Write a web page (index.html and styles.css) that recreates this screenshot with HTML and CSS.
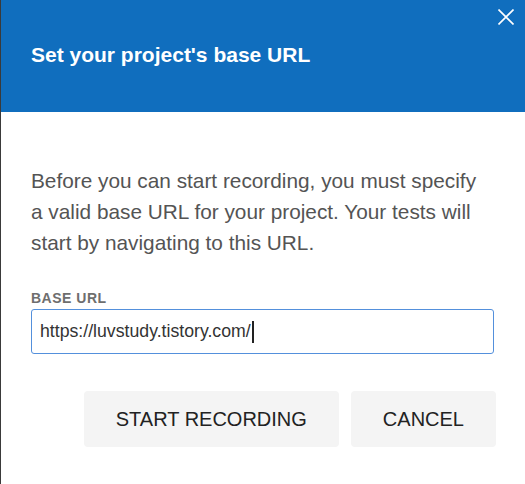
FILE: index.html
```html
<!DOCTYPE html>
<html lang="en">
<head>
<meta charset="utf-8">
<title>Set your project's base URL</title>
<link rel="stylesheet" href="styles.css">
</head>
<body>
<div class="dialog">
  <header class="dialog-header">
    <h1 class="dialog-title">Set your project's base URL</h1>
    <button class="close-btn" aria-label="Close">
      <svg width="16" height="16" viewBox="0 0 16 16"><path d="M0.5 0.5 L15.5 15.5 M15.5 0.5 L0.5 15.5" stroke="#fff" stroke-width="1.6" fill="none"/></svg>
    </button>
  </header>
  <main class="dialog-body">
    <p class="intro">Before you can start recording, you must specify a valid base URL for your project. Your tests will start by navigating to this URL.</p>
    <label class="field-label">BASE URL</label>
    <div class="url-input"><span class="url-text">https://luvstudy.tistory.com/</span><span class="caret"></span></div>
    <div class="actions">
      <button class="btn">START RECORDING</button>
      <button class="btn">CANCEL</button>
    </div>
  </main>
</div>
</body>
</html>
```

FILE: styles.css
```css
html, body {
  margin: 0;
  padding: 0;
  background: #ffffff;
}
body {
  font-family: "Liberation Sans", Arial, sans-serif;
}
.dialog {
  width: 524px;
  height: 484px;
  border-left: 1px solid #3a3a3a;
  background: #ffffff;
  display: flex;
  flex-direction: column;
}
.dialog-header {
  position: relative;
  height: 112px;
  background: #106ebe;
  padding: 0 30px;
  display: flex;
  align-items: flex-start;
}
.dialog-title {
  margin: 41px 0 0 0;
  font-size: 21px;
  line-height: 28px;
  font-weight: bold;
  color: #ffffff;
}
.close-btn {
  position: absolute;
  top: 8px;
  right: 10px;
  width: 18px;
  height: 18px;
  padding: 1px;
  border: 0;
  background: transparent;
  display: flex;
  align-items: center;
  justify-content: center;
}
.dialog-body {
  padding: 53px 31px 0 30px;
  display: flex;
  flex-direction: column;
}
.intro {
  margin: 0;
  max-width: 452px;
  font-size: 20.8px;
  line-height: 31px;
  color: #545454;
}
.field-label {
  margin-top: 32px;
  font-size: 14px;
  line-height: 17px;
  font-weight: bold;
  letter-spacing: 0.5px;
  color: #6e6e6e;
}
.url-input {
  margin-top: 2px;
  height: 43px;
  border: 1px solid #5490dc;
  border-radius: 3px;
  padding: 0 8px;
  display: flex;
  align-items: center;
  font-size: 17.7px;
  color: #333333;
}
.caret {
  display: inline-block;
  width: 2px;
  height: 22px;
  background: #222222;
  margin-left: 1px;
}
.actions {
  margin-top: 37px;
  margin-right: -2px;
  display: flex;
  justify-content: flex-end;
  gap: 12px;
}
.btn {
  height: 56px;
  padding: 0 32px;
  border: 0;
  border-radius: 4px;
  background: #f4f4f4;
  font-family: "Liberation Sans", Arial, sans-serif;
  font-size: 20px;
  color: #222222;
}
```
